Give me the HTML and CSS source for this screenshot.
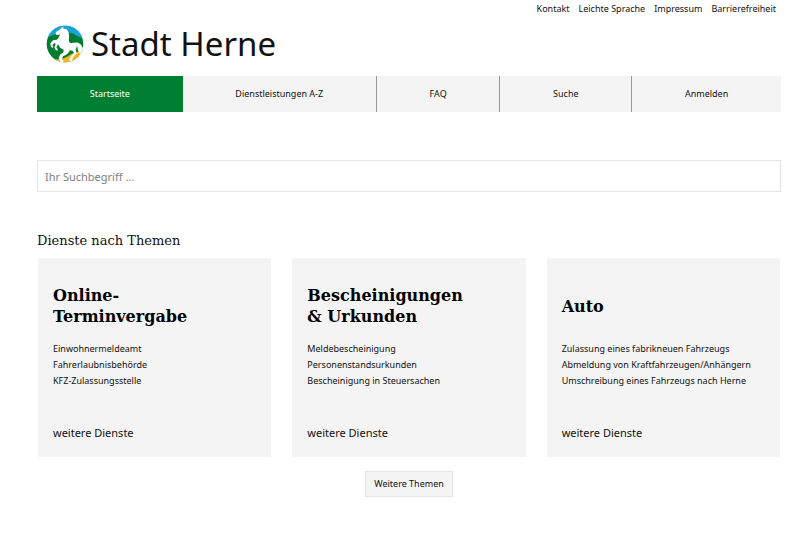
FILE: index.html
```html
<!DOCTYPE html>
<html lang="de">
<head>
<meta charset="utf-8">
<meta name="viewport" content="width=device-width, initial-scale=1">
<title>Stadt Herne</title>
<link rel="stylesheet" href="styles.css">
</head>
<body>
<div class="page">
  <header>
    <nav class="meta" aria-label="Service">
      <a href="#">Kontakt</a>
      <a href="#">Leichte Sprache</a>
      <a href="#">Impressum</a>
      <a href="#">Barrierefreiheit</a>
    </nav>
    <a class="brand" href="#">
      <svg class="brand-mark" viewBox="0 0 150 150" aria-hidden="true">
        <clipPath id="disc"><circle cx="75" cy="75" r="55"/></clipPath>
        <g clip-path="url(#disc)">
          <path fill="#007c30" d="M0 0h150v150H0z"/>
          <path fill="#19a3dd" d="M0 0h150v62C128 61 116 54 101 44 89 38 79 45 66 43 47 42 35 50 16 58z"/>
          <path fill="#f8b51e" d="M0 150V116C24 121 47 123 66 119 84 115 96 101 110 99 118 97 128 101 150 88V150z"/>
        </g>
        <path fill="#fff" d="M69 23C65 26 61 29 59 32L48 39 47 45 52 49 60 46C58 54 55 59 50 62L39 64 31 73 32 81 37 87 40 83 37 79 43 72 47 74 43 86 47 93 53 95 53 90 49 85 54 76C58 84 63 90 71 92 72 98 69 102 61 106L56 117 61 128 68 130 71 127 66 119 69 112C79 109 86 104 89 94L98 95 102 102 93 112 87 123 90 128 97 124 99 115 110 103 107 92 111 82C114 85 112 91 115 97L120 106 125 97 129 87C125 82 123 73 113 71 105 69 98 73 92 72 86 71 86 65 87 58 88 49 87 38 80 31 76 29 72 29 71 30z"/>
      </svg>
      <span class="brand-name">Stadt Herne</span>
    </a>
    <nav class="main-nav" aria-label="Hauptmenü">
      <a class="active" href="#" aria-current="page">Startseite</a>
      <a href="#">Dienstleistungen A-Z</a>
      <a href="#">FAQ</a>
      <a href="#">Suche</a>
      <a href="#">Anmelden</a>
    </nav>
  </header>
  <main>
    <form class="search" role="search">
      <input type="search" aria-label="Ihr Suchbegriff" placeholder="Ihr Suchbegriff ...">
    </form>
    <h1>Dienste nach Themen</h1>
    <div class="cards">
      <section class="card">
        <h2>Online-<br>Terminvergabe</h2>
        <ul>
          <li><a href="#">Einwohnermeldeamt</a></li>
          <li><a href="#">Fahrerlaubnisbehörde</a></li>
          <li><a href="#">KFZ-Zulassungsstelle</a></li>
        </ul>
        <a class="more" href="#">weitere Dienste</a>
      </section>
      <section class="card">
        <h2>Bescheinigungen<br>&amp; Urkunden</h2>
        <ul>
          <li><a href="#">Meldebescheinigung</a></li>
          <li><a href="#">Personenstandsurkunden</a></li>
          <li><a href="#">Bescheinigung in Steuersachen</a></li>
        </ul>
        <a class="more" href="#">weitere Dienste</a>
      </section>
      <section class="card">
        <h2>Auto</h2>
        <ul>
          <li><a href="#">Zulassung eines fabrikneuen Fahrzeugs</a></li>
          <li><a href="#">Abmeldung von Kraftfahrzeugen/Anhängern</a></li>
          <li><a href="#">Umschreibung eines Fahrzeugs nach Herne</a></li>
        </ul>
        <a class="more" href="#">weitere Dienste</a>
      </section>
    </div>
    <button class="more-topics" type="button">Weitere Themen</button>
  </main>
</div>
</body>
</html>
```
FILE: styles.css
```css
* {
  box-sizing: border-box;
}

body {
  margin: 0;
  background: #fff;
  color: #111;
  font: 9px/16px "Noto Sans", sans-serif;
}

a {
  color: inherit;
  text-decoration: none;
}

.page {
  padding: 0 31px 0 37px;
}

.meta {
  display: flex;
  justify-content: flex-end;
  gap: 9px;
  padding: 1px 5px 0 0;
}

.brand {
  display: flex;
  align-items: center;
  gap: 1px;
  width: max-content;
  margin: 2px 0 7px 3px;
}

.brand-mark {
  width: 50px;
  height: 50px;
}

.brand-name {
  font-size: 33px;
  line-height: 50px;
}

.main-nav {
  display: flex;
  background: #f4f4f4;
}

.main-nav a {
  flex: 1 1 auto;
  padding: 10px 0;
  border-left: 1px solid #999;
  text-align: center;
}

.main-nav a.active,
.main-nav a.active + a {
  border-left: 0;
}

.main-nav a.active {
  background: #007f32;
  color: #fff;
}

.search {
  margin-top: 48px;
}

.search input {
  display: block;
  width: 100%;
  height: 32px;
  padding: 0 7px;
  border: 1px solid #e4e4e4;
  border-radius: 0;
  background: #fff;
  font: inherit;
  font-size: 11px;
  appearance: none;
}

.search input::placeholder {
  color: #808080;
}

h1 {
  margin: 39px 0 7px;
  font: 13px/20px "DejaVu Serif", serif;
}

.cards {
  display: grid;
  grid-template-columns: repeat(3, 1fr);
  gap: 21px;
  padding: 0 1px;
}

.card {
  padding: 25px 15px 16px;
  background: #f4f4f4;
}

.card h2 {
  display: flex;
  align-items: center;
  height: 46px;
  margin: 0 0 12px;
  color: #000;
  font: bold 16px/21px "DejaVu Serif", serif;
}

.card ul {
  margin: 0 0 36px;
  padding: 0;
  list-style: none;
}

.more {
  display: block;
  font-size: 11px;
}

.more-topics {
  display: block;
  margin: 14px auto 0;
  padding: 3px 8px;
  border: 1px solid #e6e6e6;
  background: #f4f4f4;
  color: inherit;
  font: inherit;
  line-height: 18px;
}
```
